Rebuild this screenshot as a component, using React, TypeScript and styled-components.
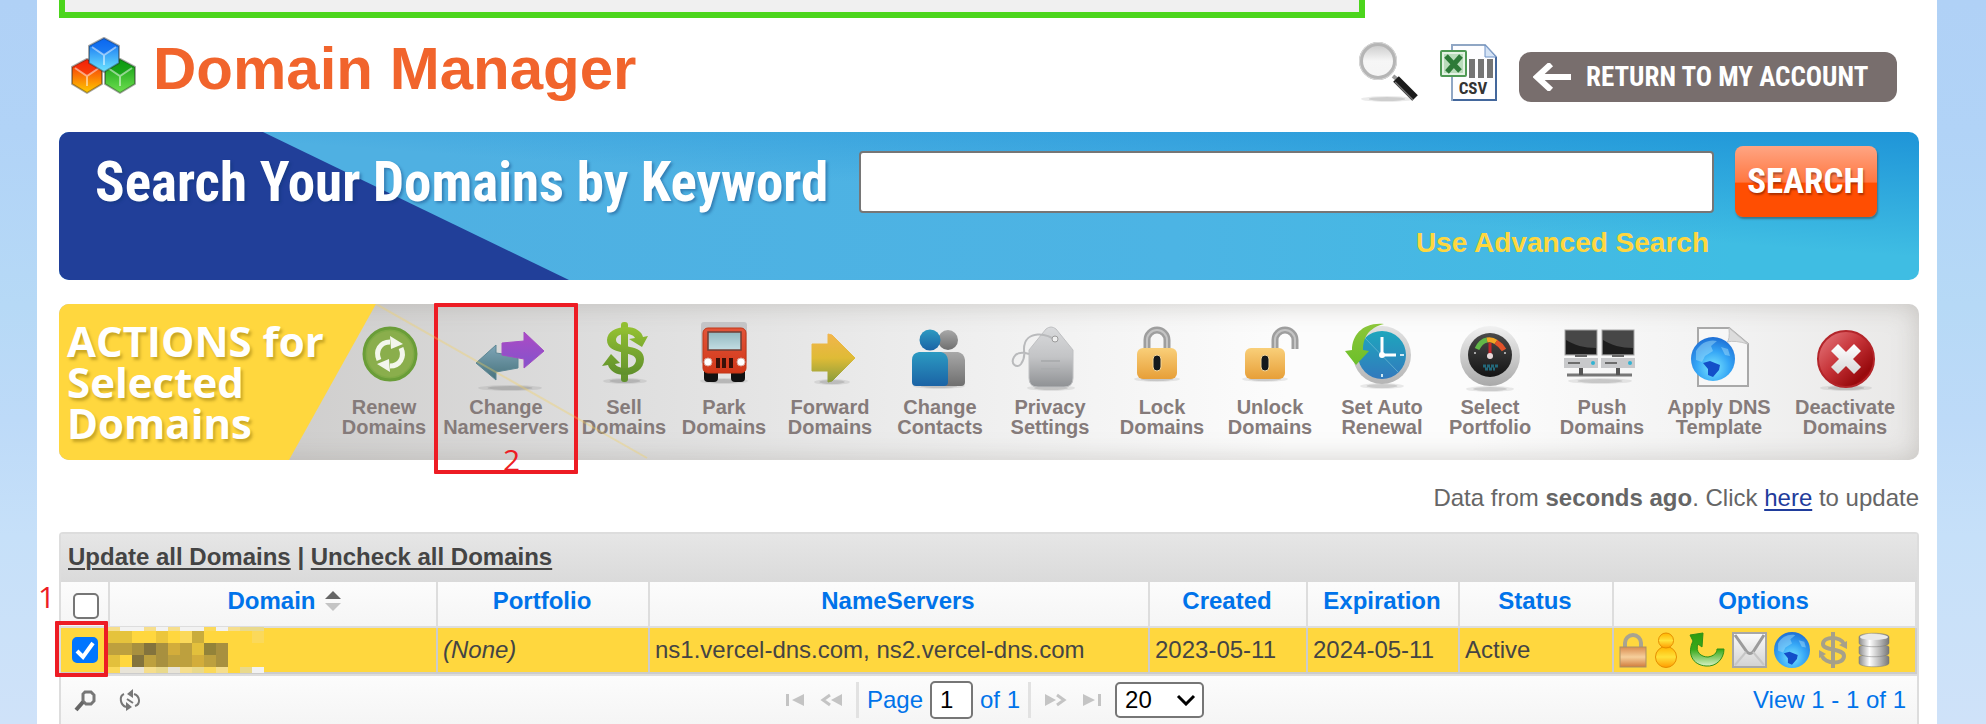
import React from 'react';
import styled, { createGlobalStyle } from 'styled-components';

const GlobalStyle = createGlobalStyle`
  *, *::before, *::after { box-sizing: border-box; }
  body {
    margin: 0;
    font-family: "Liberation Sans", Arial, sans-serif;
    font-size: 24px;
    line-height: 28px;
    color: #666;
  }
`;

const condensed = '"Roboto Condensed", "Liberation Sans", sans-serif';

/* ---------- page frame ---------- */

const Page = styled.div`
  min-height: 100vh;
  padding: 0 49px 0 37px;
  background: linear-gradient(#b0d1f6 0%, #b1d3f7 18%, #b6d9f6 42%, #bddaf8 58%, #c6e0f9 74%, #cfe2f9 100%);
`;

const Panel = styled.main`
  min-height: 100vh;
  padding: 0 18px 0 22px;
  background: #fff;
`;

const Notice = styled.div`
  height: 18px;
  max-width: 1306px;
  border: 6px solid #4bd51c;
  border-top: 0;
  background: #f0f0f0;
`;

/* ---------- header ---------- */

const Header = styled.header`
  display: flex;
  justify-content: space-between;
  align-items: flex-start;
  height: 114px;
  padding: 17px 22px 0 11px;
`;

const Brand = styled.div`
  display: flex;
  gap: 13px;
`;

const Title = styled.h1`
  margin: 0;
  font-size: 60px;
  line-height: 68px;
  color: #f1642c;
`;

const HeaderTools = styled.div`
  display: flex;
  align-items: flex-end;
  gap: 21px;
  height: 67px;
`;

const PlainButton = styled.button`
  display: block;
  padding: 0;
  border: 0;
  background: none;
  cursor: pointer;
  svg { display: block; }
`;

const ReturnButton = styled.button`
  display: flex;
  align-items: center;
  gap: 15px;
  width: 378px;
  height: 50px;
  padding: 0 0 0 14px;
  border: 0;
  border-radius: 12px;
  background: #786e6d;
  color: #fff;
  font: 700 27px/36px ${condensed};
  white-space: nowrap;
`;

/* ---------- search banner ---------- */

const SearchBanner = styled.form`
  position: relative;
  height: 148px;
  padding: 14px 42px 0 36px;
  overflow: hidden;
  border-radius: 10px;
  background:
    linear-gradient(176deg, rgba(30, 140, 215, 0) 66%, rgba(30, 140, 215, 0)),
    linear-gradient(184deg, rgba(20, 135, 212, 0.75), rgba(20, 135, 212, 0) 45%),
    linear-gradient(90deg, #4fb0e2 20%, #4cb4e4 60%, #3fbde3 90%);
  &::before {
    content: '';
    position: absolute;
    inset: 0 auto 0 0;
    width: 510px;
    background: #213f99;
    clip-path: polygon(0 0, 204px 0, 100% 100%, 0 100%);
  }
`;

const SearchRow = styled.div`
  position: relative;
  display: flex;
  align-items: center;
  height: 71px;
`;

const SearchLabel = styled.label`
  width: 764px;
  color: #fff;
  font: 700 55px/64px ${condensed};
  text-shadow: 2px 2px 3px rgba(10, 50, 110, 0.4);
  white-space: nowrap;
`;

const SearchInput = styled.input`
  flex: 1;
  min-width: 0;
  height: 62px;
  border: 2px solid #767676;
  border-radius: 4px;
  background: #fff;
  font-size: 28px;
`;

const SearchButton = styled.button`
  width: 142px;
  height: 71px;
  margin-left: 21px;
  padding: 0;
  border: 0;
  border-radius: 8px;
  background: linear-gradient(#ffa583 0%, #ff7741 51%, #ff4e02 52%);
  box-shadow: 1px 2px 2px rgba(60, 60, 60, 0.5);
  color: #fff;
  font: 700 35px/44px ${condensed};
  text-shadow: 1px 2px 2px rgba(90, 20, 0, 0.5);
`;

const AdvancedLink = styled.a`
  position: relative;
  display: block;
  width: fit-content;
  margin: 10px 168px 0 auto;
  color: #ffd73e;
  font-size: 28px;
  font-weight: 700;
  line-height: 32px;
  text-decoration: none;
`;

/* ---------- actions bar ---------- */

const ActionsBar = styled.section`
  position: relative;
  display: flex;
  height: 156px;
  margin-top: 24px;
  border-radius: 10px;
  background: linear-gradient(90deg, #cfcecd 12%, #dedede 30%, #eee 48%, #fcfcfc 66%, #fcfcfc 76%, #f2f2f2 90%, #e9e8e7 100%);
  box-shadow: inset 0 0 26px rgba(150, 145, 138, 0.42);
`;

const ActionsTitle = styled.h2`
  flex: none;
  width: 317px;
  margin: 0;
  padding: 16px 0 0 8px;
  border-radius: 10px 0 0 10px;
  background: #ffd73e;
  clip-path: polygon(0 0, 100% 0, 230px 100%, 0 100%);
  color: #fff;
  font: 700 42px/41px "Open Sans", "Noto Sans", sans-serif;
  text-shadow: 2px 3px 3px rgba(120, 95, 0, 0.4);
`;

const ActionList = styled.ul`
  flex: 1;
  display: grid;
  grid-template-columns: 106fr 138fr 98fr 102fr 110fr 110fr 110fr 114fr 102fr 122fr 94fr 130fr 104fr 148fr;
  margin: 0 0 0 -45px;
  padding: 0;
  list-style: none;
`;

const ActionItem = styled.li`
  position: relative;
  min-width: 0;
`;

const ActionButton = styled.button`
  display: flex;
  flex-direction: column;
  align-items: center;
  width: 100%;
  height: 100%;
  padding: 17px 0 0;
  border: 0;
  background: none;
  color: #857b7a;
  font: 700 20px/20px "Liberation Sans", Arial, sans-serif;
  cursor: pointer;
  svg { display: block; flex: none; }
`;

const ActionLabel = styled.span`
  white-space: pre;
`;

const Streak = styled.svg`
  position: absolute;
  top: 0;
  left: 317px;
  pointer-events: none;
`;

/* ---------- tutorial marks ---------- */

const Mark = styled.span<{ $top: number; $left: number; $width: number; $height: number }>`
  position: absolute;
  top: ${(p) => p.$top}px;
  left: ${(p) => p.$left}px;
  width: ${(p) => p.$width}px;
  height: ${(p) => p.$height}px;
  border: 4px solid #ed1c24;
  border-radius: 1px;
  pointer-events: none;
`;

const Step = styled.span<{ $top: number; $left: number }>`
  position: absolute;
  top: ${(p) => p.$top}px;
  left: ${(p) => p.$left}px;
  color: #ed1c24;
  font: 400 30px/32px "Open Sans", "Noto Sans", sans-serif;
  pointer-events: none;
`;

/* ---------- grid ---------- */

const Freshness = styled.p`
  margin: 24px 0 20px;
  text-align: right;
  a { color: #1f3c9c; text-decoration-thickness: 2px; text-underline-offset: 3px; }
`;

const Grid = styled.section`
  border: 2px solid #ddd;
  border-bottom: 0;
  border-radius: 4px 4px 0 0;
  color: #444;
`;

const GridTitle = styled.div`
  height: 48px;
  padding: 9px 7px 0;
  background: linear-gradient(#e6e6e6, #dadada);
  font-weight: 700;
  a { color: #444; text-decoration-thickness: 2px; text-underline-offset: 3px; }
`;

const Table = styled.table`
  width: 100%;
  table-layout: fixed;
  border-collapse: separate;
  border-spacing: 0;
`;

const Th = styled.th<{ $shift?: boolean }>`
  position: relative;
  height: 46px;
  padding: ${(p) => (p.$shift ? '5px 0 0 22px' : '5px 2px 0 0')};
  border-right: 2px solid #ddd;
  border-bottom: 2px solid #ddd;
  background: linear-gradient(#fcfcfc, #f5f5f5);
  color: #0073ea;
  vertical-align: top;
`;

const SortLabel = styled.span`
  display: inline-flex;
  align-items: center;
  gap: 9px;
`;

const Td = styled.td`
  position: relative;
  height: 46px;
  padding: 0 0 0 5px;
  border-right: 2px solid #ccc;
  border-bottom: 2px solid #ccc;
  background: #ffd73e;
  white-space: nowrap;
`;

const Tick = styled.input`
  display: block;
  width: 26px;
  height: 26px;
  margin: 0 0 0 11px;
  appearance: none;
  border: 2px solid #767676;
  border-radius: 5px;
  background: #fff;
  &:checked { border-color: #0075ff; background: #0075ff; }
`;

const HeadTick = styled(Tick)`
  margin: 6px 0 0 12px;
`;

const RowTick = styled(Tick)`
  margin-left: 6px;
`;

const TickMark = styled.svg`
  position: absolute;
  top: 9px;
  left: 11px;
  pointer-events: none;
`;

const Mosaic = styled.svg`
  position: absolute;
  top: -1px;
  left: -2px;
`;

const Options = styled.div`
  display: flex;
  align-items: center;
  height: 36px;
`;

/* ---------- pager ---------- */

const Pager = styled.footer`
  display: grid;
  grid-template-columns: 1fr auto 1fr;
  align-items: center;
  height: 50px;
  padding: 0 11px 0 12px;
  border-top: 2px solid #ddd;
  background: linear-gradient(#fcfcfc, #f5f5f5);
  color: #0073ea;
`;

const PagerTools = styled.div`
  display: flex;
  gap: 21px;
`;

const PagerNav = styled.nav`
  display: flex;
  align-items: center;
  gap: 14px;
  padding-left: 9px;
`;

const PageLabel = styled.label`
  display: flex;
  align-items: center;
  gap: 7px;
  height: 36px;
  padding: 0 8px;
  border: solid #e2e2e2;
  border-width: 0 3px;
`;

const PageInput = styled.input`
  width: 43px;
  height: 38px;
  padding: 0 0 0 8px;
  border: 2px solid #767676;
  border-radius: 5px;
  background: #fff;
  color: #000;
  font: 24px/28px "Liberation Sans", Arial, sans-serif;
`;

const SelectBox = styled.span`
  position: relative;
  display: block;
  margin-left: -2px;
  svg { position: absolute; top: 12px; right: 8px; pointer-events: none; }
`;

const SizeSelect = styled.select`
  display: block;
  width: 89px;
  height: 36px;
  padding: 0 0 0 8px;
  appearance: none;
  border: 2px solid #767676;
  border-radius: 5px;
  background: #fff;
  color: #000;
  font: 24px/28px "Liberation Sans", Arial, sans-serif;
`;

const ViewCount = styled.span`
  text-align: right;
`;

/* ---------- drawings ---------- */

const Grad = ({ id, from, to, mid }: { id: string; from: string; to: string; mid?: string }) => (
  <linearGradient id={id} x1="0" y1="0" x2="0" y2="1">
    <stop offset="0" stopColor={from} />
    {mid && <stop offset="0.5" stopColor={mid} />}
    <stop offset="1" stopColor={to} />
  </linearGradient>
);

const Shadow = ({ cx, cy, rx }: { cx: number; cy: number; rx: number }) => (
  <>
    <ellipse cx={cx} cy={cy} rx={rx} ry="3" fill="#000" opacity="0.08" />
    <ellipse cx={cx} cy={cy} rx={rx * 0.7} ry="2" fill="#000" opacity="0.12" />
  </>
);

const Cube = ({ x, y, top, bottom, id }: { x: number; y: number; top: string; bottom: string; id: string }) => (
  <g transform={`translate(${x} ${y})`}>
    <defs><Grad id={id} from={top} to={bottom} /></defs>
    <path d="M16 0 31 8 31 25 16 34 1 25 1 8Z" fill={`url(#${id})`} stroke="#222" strokeOpacity="0.4" strokeWidth="2" strokeLinejoin="round" />
    <path d="M16 1 30 8 16 17 2 8Z" fill={top} opacity="0.6" />
    <path d="M4 9 16 17 28 9M16 17V27" fill="none" stroke="#fff" strokeOpacity="0.5" strokeWidth="2" />
  </g>
);

const LogoIcon = () => (
  <svg width="70" height="64" viewBox="0 0 70 64" aria-hidden="true">
    <Cube id="cubeR" x={1} y={24} top="#f5200a" bottom="#ffcc00" />
    <Cube id="cubeG" x={34} y={24} top="#0a9a10" bottom="#6fe050" />
    <Cube id="cubeB" x={18} y={3} top="#0a66f0" bottom="#6fe6ff" />
  </svg>
);

const FindIcon = () => (
  <svg width="60" height="60" viewBox="0 0 60 60" aria-hidden="true">
    <defs><Grad id="lens" from="#c9c9c9" to="#f4f4f4" mid="#f6f6f6" /></defs>
    <Shadow cx={28} cy={57} rx={26} />
    <path d="m34 34 5 4" stroke="#999" strokeWidth="4" />
    <path d="m37 37 19 19" stroke="#1b1b1b" strokeWidth="8" />
    <path d="m36 40 18 18" stroke="#777" strokeWidth="1.5" />
    <circle cx="19" cy="19" r="17" fill="url(#lens)" stroke="#b5b5b5" strokeWidth="4" />
    <circle cx="19" cy="19" r="18.5" fill="none" stroke="#d9d9d9" />
  </svg>
);

const CsvIcon = () => (
  <svg width="58" height="58" viewBox="0 0 58 58" aria-hidden="true">
    <path d="M12 1h33l11 12v43H12Z" fill="#fdfdff" stroke="#8fa6c4" strokeWidth="2" />
    <path d="M56 13v43H13" fill="none" stroke="#43679c" strokeWidth="2" />
    <path d="M45 1v12h11Z" fill="#d5e3f5" stroke="#6f92c6" />
    <path d="M32 15v19M41 15v19M50 15v19" stroke="#757575" strokeWidth="6" />
    <rect x="1" y="7" width="25" height="25" rx="1" fill="#e4f2e4" stroke="#4f9a55" strokeWidth="2" />
    <rect x="4" y="10" width="19" height="19" fill="#b9dcbb" />
    <path d="m6 12 14 15M21 12 7 28" stroke="#2d7a38" strokeWidth="5" />
    <text x="33" y="50" textAnchor="middle" fontFamily="Roboto Condensed, Liberation Sans, sans-serif" fontWeight="700" fontSize="17" fill="#333">CSV</text>
  </svg>
);

const BackArrow = () => (
  <svg width="38" height="28" viewBox="0 0 38 28" aria-hidden="true">
    <path d="M18 1 4 14l14 13M4 14h34" fill="none" stroke="#fff" strokeWidth="6" />
  </svg>
);

const ActionSvg = ({ children }: { children: React.ReactNode }) => (
  <svg width="96" height="76" viewBox="0 0 96 76" aria-hidden="true">{children}</svg>
);

const RenewIcon = () => (
  <ActionSvg>
    <circle cx="54" cy="33" r="26" fill="#7faa45" stroke="#6a9d38" strokeWidth="3" />
    <circle cx="54" cy="33" r="23" fill="#8aae4c" />
    <path d="M43 39c-4-9 1-18 11-18M65 27c4 9-1 18-11 18" fill="none" stroke="#f3f6ec" strokeWidth="5" />
    <path d="m54 15 13 8-12 5ZM54 51l-13-8 12-5Z" fill="#f3f6ec" />
  </ActionSvg>
);

const NameserverIcon = () => (
  <ActionSvg>
    <defs>
      <Grad id="teal" from="#7fa6b8" to="#47727c" />
      <Grad id="violet" from="#ad49c4" to="#8254cc" />
    </defs>
    <Shadow cx={52} cy={67} rx={32} />
    <path d="M18 42 38 24V32l22 3v12l-22 4v8Z" fill="url(#teal)" stroke="#5d8794" strokeLinejoin="round" />
    <path d="M86 30 66 11v9l-22 2v12l22 4v9Z" fill="url(#violet)" stroke="#a34cc4" strokeLinejoin="round" />
  </ActionSvg>
);

const SellIcon = () => (
  <ActionSvg>
    <defs><Grad id="cash" from="#94c132" to="#5f8f2c" /></defs>
    <Shadow cx={49} cy={60} rx={22} />
    <g fill="url(#cash)">
      <rect x="45" y="1" width="7" height="60" rx="3" />
      <path d="M50 6c10 0 16 5 17 10l5-1-6 11-13-8 6-1c-1-2-4-4-9-4-6 0-10 2-10 6 0 9 28 3 28 19 0 10-9 16-19 16-9 0-15-4-17-10l-6 1 9-12 9 9-5 1c1 2 5 4 10 4 6 0 11-3 11-8 0-10-29-4-29-20 0-8 9-13 19-13Z" />
    </g>
  </ActionSvg>
);

const ParkIcon = () => (
  <ActionSvg>
    <defs><Grad id="glass" from="#92b8bf" to="#c3dde3" /><Grad id="bus" from="#e2553a" to="#d13718" /></defs>
    <rect x="25" y="1" width="46" height="42" rx="3" fill="#c4c4c6" />
    <Shadow cx={48} cy={60} rx={24} />
    <rect x="28" y="46" width="14" height="15" rx="4" fill="#111" />
    <rect x="55" y="46" width="14" height="15" rx="4" fill="#111" />
    <rect x="27" y="7" width="43" height="45" rx="5" fill="url(#bus)" stroke="#c23616" />
    <rect x="32" y="11" width="33" height="18" fill="url(#glass)" stroke="#6f3f36" strokeWidth="1.5" />
    <circle cx="32" cy="41" r="4" fill="#fff" stroke="#d9a79c" />
    <circle cx="65" cy="41" r="4" fill="#fff" stroke="#d9a79c" />
    <path d="M42 37v10M48 37v10M55 37v10" stroke="#381008" strokeWidth="4" />
  </ActionSvg>
);

const ForwardIcon = () => (
  <ActionSvg>
    <defs><Grad id="fwd" from="#f2b54c" to="#8a9d3c" mid="#dfbb36" /></defs>
    <Shadow cx={50} cy={61} rx={18} />
    <path d="M30 23h16V13l4 1 23 23-23 23-4 1V50H30Z" fill="url(#fwd)" stroke="url(#fwd)" strokeLinejoin="round" />
  </ActionSvg>
);

const ContactsIcon = () => (
  <ActionSvg>
    <defs><Grad id="man" from="#2c9ac2" to="#1b63a5" /><Grad id="man2" from="#a8a8a8" to="#6f6f6f" /></defs>
    <Shadow cx={47} cy={65} rx={26} />
    <circle cx="56" cy="19" r="10" fill="url(#man2)" />
    <path d="M42 31h24q6 1 7 8v22q0 4-4 4H42Z" fill="url(#man2)" />
    <circle cx="38" cy="19" r="10.5" fill="url(#man)" />
    <path d="M27 31h22q6 1 7 8v22q0 4-4 4H24q-4 0-4-4V39q0-7 7-8Z" fill="url(#man)" />
  </ActionSvg>
);

const PrivacyIcon = () => (
  <ActionSvg>
    <defs><Grad id="tag" from="#d9dadc" to="#8f9194" mid="#c3c4c6" /></defs>
    <Shadow cx={49} cy={67} rx={24} />
    <path d="M44 8q5-4 10 0l17 21v28q0 9-9 9H36q-9 0-9-9V29Z" fill="url(#tag)" stroke="#bfc0c2" />
    <path d="M39 40h19M39 48h19" stroke="#abadaf" strokeWidth="2" />
    <path d="M53 20c-5-8-31-12-31 8 0 4 2 8-3 15-4 5-11 0-7-7 3-5 9-5 15-3" fill="none" stroke="#b9babc" strokeWidth="2" />
    <circle cx="53" cy="18" r="3" fill="#eee" stroke="#9a9a9a" />
  </ActionSvg>
);

const Padlock = ({ id, shackle }: { id: string; shackle: string }) => (
  <ActionSvg>
    <defs><Grad id={id} from="#f9cf79" to="#e79f38" /></defs>
    <Shadow cx={43} cy={58} rx={23} />
    <path d={shackle} fill="none" stroke="#9e9e9e" strokeWidth="7" />
    <path d={shackle} fill="none" stroke="#c4c4c4" strokeWidth="2" />
    <rect x="23" y="27" width="40" height="31" rx="6" fill={`url(#${id})`} />
    <rect x="39" y="34" width="8" height="16" rx="4" fill="#15191c" stroke="#f6d798" strokeWidth="1" />
  </ActionSvg>
);

const AutoIcon = () => (
  <ActionSvg>
    <defs><Grad id="clock" from="#1ea6bd" to="#3279bd" /><Grad id="ring" from="#e2e2e2" to="#b5b5b5" /><Grad id="sweep" from="#8cc63a" to="#6cbf2a" /></defs>
    <Shadow cx={48} cy={65} rx={22} />
    <circle cx="48" cy="34" r="29" fill="url(#ring)" />
    <circle cx="48" cy="34" r="24" fill="url(#clock)" />
    <path d="m30 16 34 35" stroke="#7cc3d8" strokeOpacity="0.6" />
    <path d="M48 16v18h14" fill="none" stroke="#fff" strokeWidth="3" />
    <path d="M66 34h4M48 53v3" stroke="#cfe8f2" strokeWidth="2" />
    <circle cx="48" cy="34" r="3" fill="#fff" />
    <path d="M50 3C34 7 29 17 29 29l6 1-13 14-11-14 7-1C18 14 29 1 50 3Z" fill="url(#sweep)" />
  </ActionSvg>
);

const PortfolioIcon = () => (
  <ActionSvg>
    <defs><Grad id="dial" from="#f1f1f1" to="#a9a9a9" /><Grad id="face" from="#4a4a4a" to="#141414" /></defs>
    <Shadow cx={48} cy={68} rx={24} />
    <circle cx="48" cy="35" r="30" fill="url(#dial)" />
    <circle cx="48" cy="34" r="22" fill="url(#face)" />
    <path d="M35 28q4-8 10-9" fill="none" stroke="#62b848" strokeWidth="5" />
    <path d="M45 19q5-1 9 2" fill="none" stroke="#f5a623" strokeWidth="5" />
    <path d="M54 21q5 3 8 8" fill="none" stroke="#e2522a" strokeWidth="5" />
    <path d="M48 22v12" stroke="#c4262b" strokeWidth="3" />
    <circle cx="48" cy="35" r="3" fill="#e8dada" />
    <path d="M41 45h15M43 48h10" stroke="#23687a" strokeWidth="3" strokeDasharray="3 1" />
    <circle cx="33" cy="32" r="1" fill="#ccc" /><circle cx="63" cy="32" r="1" fill="#ccc" />
  </ActionSvg>
);

const Monitor = ({ x }: { x: number }) => (
  <g transform={`translate(${x} 0)`}>
    <rect x="1" y="9" width="32" height="25" fill="#474747" stroke="#a5a5a5" />
    <path d="M2 19C10 24 20 27 32 27v6H2Z" fill="#1d1d1d" />
    <path d="M11 35h12" stroke="#666" strokeWidth="2" />
    <rect x="0" y="37" width="34" height="10" fill="#c8c9cb" />
    <path d="M4 42h12" stroke="#6d6d6d" strokeWidth="2" />
    <circle cx="29" cy="42" r="2" fill="#31b3d2" />
    <path d="M17 47v7" stroke="#555" strokeWidth="4" />
  </g>
);

const PushIcon = () => (
  <ActionSvg>
    <Shadow cx={46} cy={60} rx={32} />
    <path d="M13 54h65" stroke="#777" strokeWidth="3" />
    <Monitor x={10} />
    <Monitor x={47} />
  </ActionSvg>
);

const Globe = ({ id, cx, cy, r }: { id: string; cx: number; cy: number; r: number }) => (
  <g transform={`translate(${cx} ${cy}) scale(${r / 22})`}>
    <defs>
      <radialGradient id={id} cx="0.5" cy="0.7" r="0.75">
        <stop offset="0" stopColor="#7be6ff" /><stop offset="0.5" stopColor="#35a6f6" /><stop offset="1" stopColor="#1a66d0" />
      </radialGradient>
    </defs>
    <circle r="22" fill={`url(#${id})`} />
    <path d="M-17-8C-12-17-3-20 4-18L-2-13 0-8-8-3-11 3-17 1ZM8-12 15-10 17-3 12-4Z" fill="#a9e2fb" opacity="0.45" />
    <path d="M-10 4-3 2 7 6 6 11 0 18-5 16-5 10Z" fill="#134fc9" />
  </g>
);

const DnsIcon = () => (
  <ActionSvg>
    <path d="M27 7h31l19 16v42H27Z" fill="#f7f7f7" stroke="#a9a9a9" strokeWidth="2" />
    <path d="M58 7q1 12-2 14 8-2 21 2Z" fill="#dcdcdc" stroke="#c4c4c4" />
    <Globe id="dnsGlobe" cx={42} cy={38} r={22} />
  </ActionSvg>
);

const DeactivateIcon = () => (
  <ActionSvg>
    <defs>
      <linearGradient id="stop" x1="0" y1="0" x2="1" y2="1">
        <stop offset="0" stopColor="#e98084" /><stop offset="0.45" stopColor="#c63338" /><stop offset="0.8" stopColor="#97090c" /><stop offset="1" stopColor="#e01214" />
      </linearGradient>
      <Grad id="cross" from="#fff" to="#d8d8d8" />
    </defs>
    <Shadow cx={49} cy={67} rx={26} />
    <circle cx="49" cy="38" r="28" fill="url(#stop)" stroke="#b3252a" strokeWidth="2" />
    <path d="m41 23 8 8 8-8 7 7-8 8 8 8-7 7-8-8-8 8-7-7 8-8-8-8Z" fill="url(#cross)" />
  </ActionSvg>
);

const SortIcon = () => (
  <svg width="16" height="22" viewBox="0 0 16 22" aria-hidden="true">
    <path d="m8 1 8 8H0Z" fill="#666" />
    <path d="m8 21 8-8H0Z" fill="#c4c4c4" />
  </svg>
);

/* Tones of the masked domain name: one string per row, one letter per cell. */
const TONES: Record<string, string> = {
  a: '#f6de8c', b: '#f1eee4', c: '#ffd73e', d: '#f2f2f2', e: '#ecc63c', f: '#e5c33c', g: '#fbd95a', h: '#c9ac3c',
  i: '#bda03e', j: '#a8903f', k: '#83733d', l: '#d3ad3b', m: '#938339', n: '#e3c03c', o: '#e9d98c', p: '#e8e4d8',
};
const MOSAIC_ROWS = [
  { y: 0, h: 4, cells: 'addadaddgdaoo' },
  { y: 4, h: 12, cells: 'ffccecghccccg' },
  { y: 16, h: 12, cells: 'iijkjlinmjccc' },
  { y: 28, h: 12, cells: 'nckijiilijccc' },
  { y: 40, h: 6, cells: 'gppaopaogacod' },
];

const MaskedName = () => (
  <Mosaic width="156" height="46" viewBox="0 0 156 46" role="img" aria-label="Hidden domain name" shapeRendering="crispEdges">
    {MOSAIC_ROWS.map((row) =>
      row.cells.split('').map((tone, i) => (
        <rect key={`${row.y}-${i}`} x={i * 12} y={row.y} width="12" height={row.h} fill={TONES[tone]} />
      )),
    )}
  </Mosaic>
);

const OptionIcons = () => (
  <svg width="276" height="36" viewBox="0 0 276 36" aria-hidden="true">
    <defs>
      <Grad id="oLock" from="#d98c50" to="#d07c3c" mid="#f6cf9c" />
      <Grad id="oUser" from="#ffb400" to="#ff9c00" mid="#ffe23a" />
      <Grad id="oTurn" from="#2e9b0f" to="#d8f2c4" mid="#39a91b" />
      <Grad id="oMail" from="#fbfbfb" to="#d2d2d2" />
      <linearGradient id="oDisk"><stop offset="0" stopColor="#8a8a8a" /><stop offset="0.35" stopColor="#fff" /><stop offset="1" stopColor="#777" /></linearGradient>
    </defs>
    <path d="M6 17V11a8 8 0 0 1 16 0v6" fill="none" stroke="#a8a391" strokeWidth="4" />
    <rect x="1" y="15" width="26" height="20" fill="url(#oLock)" stroke="#ab9164" />
    <g fill="url(#oUser)" stroke="#e68e00">
      <circle cx="47" cy="25" r="10.5" /><circle cx="47" cy="8.5" r="7.5" />
    </g>
    <path d="M71 3 84 1l-1 14-4-3c-3 8 3 13 10 13 6-1 9-4 9-8h7c0 10-8 18-18 17-14-1-19-13-13-25Z" fill="url(#oTurn)" stroke="#2f8f18" />
    <rect x="114" y="1" width="33" height="34" fill="url(#oMail)" stroke="#a7a7a7" strokeWidth="2" />
    <path d="m116 3 12 17q3 3 6 0L145 3" fill="none" stroke="#9b9b9b" strokeWidth="3" />
    <path d="m116 33 11-13M145 33l-11-13" fill="none" stroke="#c6c6c6" strokeWidth="2" />
    <Globe id="optGlobe" cx={173} cy={18} r={18} />
    <g fill="none" stroke="#a6a08a" strokeWidth="4">
      <path d="M214 0v36" /><path d="M225 12c-3-8-21-8-21 0 0 7 21 4 21 12 0 9-19 8-22 0" />
    </g>
    <path d="m220 13 8-4v8ZM207 22l-7 4v-8Z" fill="#a6a08a" />
    <g fill="url(#oDisk)" stroke="#777" strokeWidth="0.5">
      <path d="M240 25c0-3 30-3 30 0v6c0 5-30 5-30 0Z" />
      <path d="M240 15c0-3 30-3 30 0v6c0 5-30 5-30 0Z" />
      <path d="M240 5c0-5 30-5 30 0v6c0 5-30 5-30 0Z" />
    </g>
    <ellipse cx="255" cy="5" rx="14" ry="3" fill="#e9e9e9" />
  </svg>
);

const PagerArrow = ({ kind }: { kind: 'first' | 'prev' | 'next' | 'last' }) => {
  const flip = kind === 'next' || kind === 'last';
  const end = kind === 'first' || kind === 'last';
  return (
    <svg width="22" height="14" viewBox="0 0 22 14" aria-hidden="true">
      <g transform={flip ? 'translate(22 0) scale(-1 1)' : undefined} fill="#c4c4c4">
        {end ? <path d="M2 1h3v12H2ZM20 1v12L8 7Z" /> : <path d="M22 1v12L11 7Z" />}
        {!end && <path d="m10 2-7 5 7 5" fill="none" stroke="#c4c4c4" strokeWidth="3" />}
      </g>
    </svg>
  );
};

const ACTIONS = [
  { label: 'Renew\nDomains', icon: <RenewIcon /> },
  { label: 'Change\nNameservers', icon: <NameserverIcon />, step: true },
  { label: 'Sell\nDomains', icon: <SellIcon /> },
  { label: 'Park\nDomains', icon: <ParkIcon /> },
  { label: 'Forward\nDomains', icon: <ForwardIcon /> },
  { label: 'Change\nContacts', icon: <ContactsIcon /> },
  { label: 'Privacy\nSettings', icon: <PrivacyIcon /> },
  { label: 'Lock\nDomains', icon: <Padlock id="lockA" shackle="M33 30V19a10 10 0 0 1 20 0v11" /> },
  { label: 'Unlock\nDomains', icon: <Padlock id="lockB" shackle="M53 30V19a10 10 0 0 1 20 0v9" /> },
  { label: 'Set Auto\nRenewal', icon: <AutoIcon /> },
  { label: 'Select\nPortfolio', icon: <PortfolioIcon /> },
  { label: 'Push\nDomains', icon: <PushIcon /> },
  { label: 'Apply DNS\nTemplate', icon: <DnsIcon /> },
  { label: 'Deactivate\nDomains', icon: <DeactivateIcon /> },
];

const COLUMN_WIDTHS = [49, 328, 212, 500, 158, 152, 154];

export default function App() {
  return (
    <Page>
      <GlobalStyle />
      <Panel>
        <Notice />
        <Header>
          <Brand>
            <LogoIcon />
            <Title>Domain Manager</Title>
          </Brand>
          <HeaderTools>
            <PlainButton type="button" aria-label="Find"><FindIcon /></PlainButton>
            <PlainButton type="button" aria-label="Export"><CsvIcon /></PlainButton>
            <ReturnButton type="button"><BackArrow />RETURN TO MY ACCOUNT</ReturnButton>
          </HeaderTools>
        </Header>

        <SearchBanner onSubmit={(e) => e.preventDefault()}>
          <SearchRow>
            <SearchLabel htmlFor="keyword">Search Your Domains by Keyword</SearchLabel>
            <SearchInput id="keyword" type="text" />
            <SearchButton type="submit">SEARCH</SearchButton>
          </SearchRow>
          <AdvancedLink href="#advanced">Use Advanced Search</AdvancedLink>
        </SearchBanner>

        <ActionsBar>
          <ActionsTitle>ACTIONS for<br />Selected<br />Domains</ActionsTitle>
          <ActionList>
            {ACTIONS.map((action) => (
              <ActionItem key={action.label}>
                <ActionButton type="button">
                  {action.icon}
                  <ActionLabel>{action.label}</ActionLabel>
                </ActionButton>
                {action.step && (
                  <>
                    <Mark $top={-1} $left={-3} $width={144} $height={171} />
                    <Step $top={140} $left={66}>2</Step>
                  </>
                )}
              </ActionItem>
            ))}
          </ActionList>
          <Streak width="272" height="156" viewBox="0 0 272 156" aria-hidden="true">
            <path d="M0 0 271 154" stroke="#f5d25a" strokeOpacity="0.35" strokeWidth="2" />
          </Streak>
        </ActionsBar>

        <Freshness>
          Data from <b>seconds ago</b>. Click <a href="#update">here</a> to update
        </Freshness>

        <Grid>
          <GridTitle>
            <a href="#update-all">Update all Domains</a> | <a href="#uncheck-all">Uncheck all Domains</a>
          </GridTitle>
          <Table>
            <colgroup>
              {COLUMN_WIDTHS.map((w, i) => <col key={i} width={w} />)}
              <col />
            </colgroup>
            <thead>
              <tr>
                <Th scope="col">
                  <HeadTick type="checkbox" aria-label="Select all domains" />
                  <Step $top={-1} $left={-23}>1</Step>
                </Th>
                <Th scope="col" $shift><SortLabel>Domain <SortIcon /></SortLabel></Th>
                <Th scope="col">Portfolio</Th>
                <Th scope="col">NameServers</Th>
                <Th scope="col">Created</Th>
                <Th scope="col">Expiration</Th>
                <Th scope="col">Status</Th>
                <Th scope="col">Options</Th>
              </tr>
            </thead>
            <tbody>
              <tr>
                <Td>
                  <RowTick type="checkbox" defaultChecked aria-label="Select domain" />
                  <TickMark width="26" height="26" viewBox="0 0 26 26" aria-hidden="true">
                    <path d="m5 14 6 6L21 6" fill="none" stroke="#fff" strokeWidth="4" />
                  </TickMark>
                  <Mark $top={-7} $left={-6} $width={53} $height={56} />
                </Td>
                <Td><MaskedName /></Td>
                <Td><i>(None)</i></Td>
                <Td>ns1.vercel-dns.com, ns2.vercel-dns.com</Td>
                <Td>2023-05-11</Td>
                <Td>2024-05-11</Td>
                <Td>Active</Td>
                <Td><Options><OptionIcons /></Options></Td>
              </tr>
            </tbody>
          </Table>
          <Pager>
            <PagerTools>
              <PlainButton type="button" aria-label="Find records">
                <svg width="24" height="24" viewBox="0 0 24 24" aria-hidden="true">
                  <path d="M12 4h6l3 3v6l-3 3h-5l-3-3V6Z" fill="none" stroke="#777" strokeWidth="3" />
                  <path d="m10 14-7 8" stroke="#666" strokeWidth="4" />
                </svg>
              </PlainButton>
              <PlainButton type="button" aria-label="Reload grid">
                <svg width="24" height="24" viewBox="0 0 24 24" aria-hidden="true">
                  <path d="M8 19c-6-2-7-11-2-13M16 6c6 2 7 10 1 12M9 11l6 4" fill="none" stroke="#777" strokeWidth="2" />
                  <path d="M15 1v9L9 6ZM8 14v9l6-4Z" fill="#777" />
                </svg>
              </PlainButton>
            </PagerTools>
            <PagerNav aria-label="Pages">
              <PlainButton type="button" aria-label="First page"><PagerArrow kind="first" /></PlainButton>
              <PlainButton type="button" aria-label="Previous page"><PagerArrow kind="prev" /></PlainButton>
              <PageLabel>Page <PageInput type="text" defaultValue="1" /> of 1</PageLabel>
              <PlainButton type="button" aria-label="Next page"><PagerArrow kind="next" /></PlainButton>
              <PlainButton type="button" aria-label="Last page"><PagerArrow kind="last" /></PlainButton>
              <SelectBox>
                <SizeSelect aria-label="Rows per page" defaultValue="20">
                  <option>20</option>
                  <option>50</option>
                  <option>100</option>
                </SizeSelect>
                <svg width="20" height="12" viewBox="0 0 20 12" aria-hidden="true">
                  <path d="m2 2 8 8 8-8" fill="none" stroke="#000" strokeWidth="3" />
                </svg>
              </SelectBox>
            </PagerNav>
            <ViewCount>View 1 - 1 of 1</ViewCount>
          </Pager>
        </Grid>
      </Panel>
    </Page>
  );
}
